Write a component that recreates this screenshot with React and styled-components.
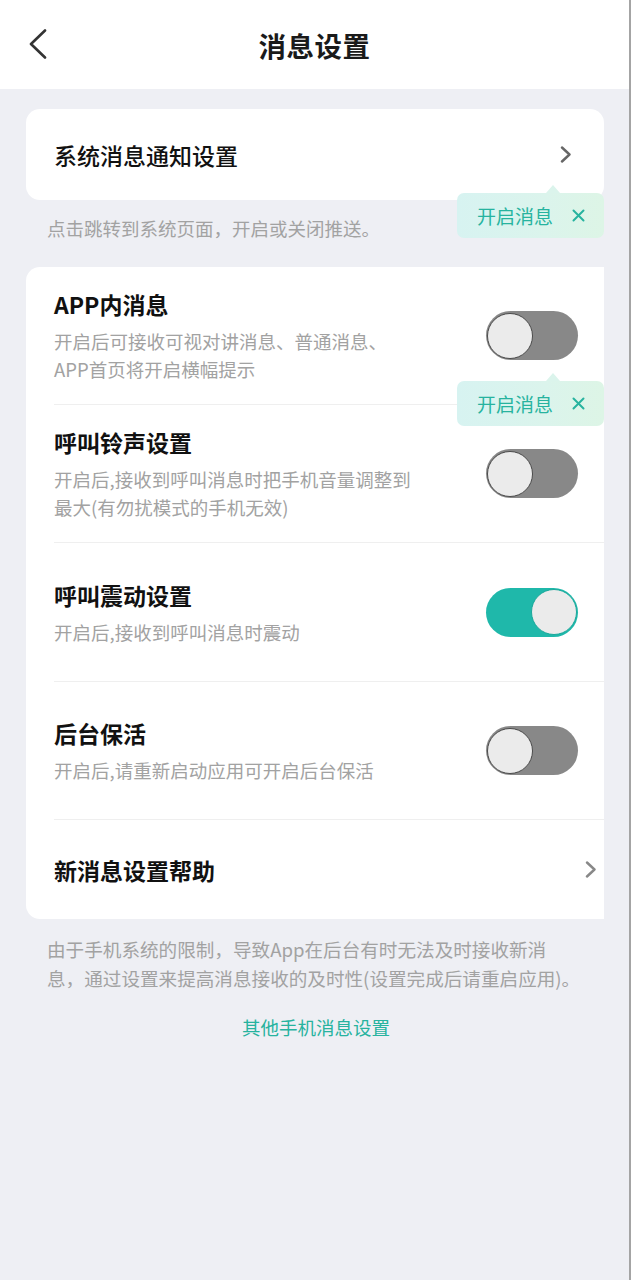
import React from "react";
import styled, { createGlobalStyle } from "styled-components";

const Global = createGlobalStyle`
  html, body { margin: 0; padding: 0; background: #eeeff4; }
  body { font-family: "Noto Sans CJK SC", "Noto Sans", sans-serif; }
  * { box-sizing: border-box; }
`;

const Page = styled.div`
  width: 631px;
  min-height: 1280px;
  background: #eeeff4;
  border-right: 2px solid #a4a4a4;
  display: flex;
  flex-direction: column;
`;

const Header = styled.header`
  height: 89px;
  background: #fff;
  display: flex;
  align-items: center;
  justify-content: center;
  position: relative;
`;

const BackBtn = styled.button`
  position: absolute;
  left: 24px;
  top: 26px;
  width: 28px;
  height: 36px;
  border: 0;
  padding: 0;
  background: none;
  display: flex;
  align-items: center;
  justify-content: center;
`;

const Title = styled.h1`
  margin: 0;
  font-size: 27.5px;
  font-weight: 700;
  color: #1a1a1a;
  letter-spacing: 0.5px;
`;

const Body = styled.main`
  padding: 20px 25px 0 26px;
  display: flex;
  flex-direction: column;
`;

const Card = styled.section`
  position: relative;
  background: #fff;
  border-radius: ${(p) => (p.$square ? "14px 0 0 14px" : "14px")};
`;

const NavRow = styled.div`
  height: ${(p) => p.$h}px;
  display: flex;
  align-items: center;
  justify-content: space-between;
  padding: 0 ${(p) => p.$pr}px 0 28px;
`;

const NavLabel = styled.span`
  font-size: 23px;
  font-weight: ${(p) => p.$w};
  color: #111;
`;

const Hint = styled.p`
  margin: 14px 0 25px 21px;
  font-size: 18.5px;
  line-height: 28px;
  color: #a2a2a2;
`;

const Row = styled.div`
  height: ${(p) => p.$h}px;
  display: flex;
  align-items: center;
  justify-content: space-between;
  padding: 0 26px 0 0;
  border-bottom: 1px solid #efefef;
  margin-left: 28px;
`;

const RowText = styled.div`
  display: flex;
  flex-direction: column;
  gap: 7px;
`;

const RowTitle = styled.div`
  font-size: 23px;
  line-height: 32px;
  font-weight: 700;
  color: #111;
`;

const RowDesc = styled.div`
  font-size: 18.5px;
  line-height: 28px;
  color: #a2a2a2;
  white-space: nowrap;
`;

const Track = styled.div`
  width: 92px;
  height: 49px;
  border-radius: 25px;
  background: ${(p) => (p.$on ? "#1fb8aa" : "#888888")};
  display: flex;
  align-items: center;
  justify-content: ${(p) => (p.$on ? "flex-end" : "flex-start")};
  padding: 0 1px;
  flex-shrink: 0;
`;

const Knob = styled.div`
  width: 46px;
  height: 46px;
  border-radius: 50%;
  background: #ebebeb;
  border: 1.5px solid ${(p) => (p.$on ? "#1aa89b" : "#4a4a4a")};
`;

const Tip = styled.div`
  position: absolute;
  right: 0;
  top: ${(p) => p.$top}px;
  width: 147px;
  height: 45px;
  border-radius: 7px;
  background: linear-gradient(90deg, #d7f3f1 0%, #dbf4ec 60%, #ddf5e6 100%);
  display: flex;
  align-items: center;
  padding: 0 19px 0 20px;
  justify-content: space-between;
  z-index: 2;

  &::before {
    content: "";
    position: absolute;
    top: -8px;
    left: 89px;
    border-left: 7px solid transparent;
    border-right: 7px solid transparent;
    border-bottom: 8px solid #dbf4ec;
  }
`;

const TipText = styled.span`
  font-size: 19px;
  color: #27b39f;
`;

const Footer = styled.p`
  margin: 15px 0 0 21px;
  font-size: 18.6px;
  line-height: 29px;
  color: #a2a2a2;
  white-space: nowrap;
`;

const LinkText = styled.a`
  margin-top: 21px;
  align-self: center;
  font-size: 18.5px;
  line-height: 28px;
  color: #27b39f;
  text-decoration: none;
  padding-left: 2px;
`;

const Chevron = ({ color = "#666", w = 12, h = 17 }) => (
  <svg width={w} height={h} viewBox="0 0 12 17" fill="none">
    <path d="M2 1.5 L9.5 8.5 L2 15.5" stroke={color} strokeWidth="2.4" strokeLinecap="round" strokeLinejoin="round" />
  </svg>
);

const Close = () => (
  <svg width="13" height="13" viewBox="0 0 13 13">
    <path d="M1.5 1.5 L11.5 11.5 M11.5 1.5 L1.5 11.5" stroke="#27b39f" strokeWidth="2" strokeLinecap="round" />
  </svg>
);

const Toggle = ({ on }) => (
  <Track $on={on}>
    <Knob $on={on} />
  </Track>
);

const TipBubble = ({ top }) => (
  <Tip $top={top}>
    <TipText>开启消息</TipText>
    <Close />
  </Tip>
);

const rows = [
  { title: "APP内消息", desc: ["开启后可接收可视对讲消息、普通消息、", "APP首页将开启横幅提示"], on: false, h: 138 },
  { title: "呼叫铃声设置", desc: ["开启后,接收到呼叫消息时把手机音量调整到", "最大(有勿扰模式的手机无效)"], on: false, h: 138 },
  { title: "呼叫震动设置", desc: ["开启后,接收到呼叫消息时震动"], on: true, h: 139 },
  { title: "后台保活", desc: ["开启后,请重新启动应用可开启后台保活"], on: false, h: 138 },
];

export default function App() {
  return (
    <Page>
      <Global />
      <Header>
        <BackBtn aria-label="返回">
          <svg width="20" height="30" viewBox="0 0 20 30" fill="none">
            <path d="M17 1.5 L3 15 L17 28.5" stroke="#333" strokeWidth="2.6" strokeLinecap="round" strokeLinejoin="round" />
          </svg>
        </BackBtn>
        <Title>消息设置</Title>
      </Header>
      <Body>
        <Card>
          <NavRow $h={91} $pr={32}>
            <NavLabel $w={500}>系统消息通知设置</NavLabel>
            <Chevron color="#666" />
          </NavRow>
          <TipBubble top={84} />
        </Card>
        <Hint>点击跳转到系统页面，开启或关闭推送。</Hint>
        <Card $square>
          {rows.map((r) => (
            <Row key={r.title} $h={r.h}>
              <RowText>
                <RowTitle>{r.title}</RowTitle>
                <RowDesc>
                  {r.desc.map((d, j) => (
                    <div key={j}>{d}</div>
                  ))}
                </RowDesc>
              </RowText>
              <Toggle on={r.on} />
            </Row>
          ))}
          <NavRow $h={99} $pr={7}>
            <NavLabel $w={700}>新消息设置帮助</NavLabel>
            <Chevron color="#888" />
          </NavRow>
          <TipBubble top={114} />
        </Card>
        <Footer>
          由于手机系统的限制，导致App在后台有时无法及时接收新消
          <br />
          息，通过设置来提高消息接收的及时性(设置完成后请重启应用)。
        </Footer>
        <LinkText href="#">其他手机消息设置</LinkText>
      </Body>
    </Page>
  );
}
